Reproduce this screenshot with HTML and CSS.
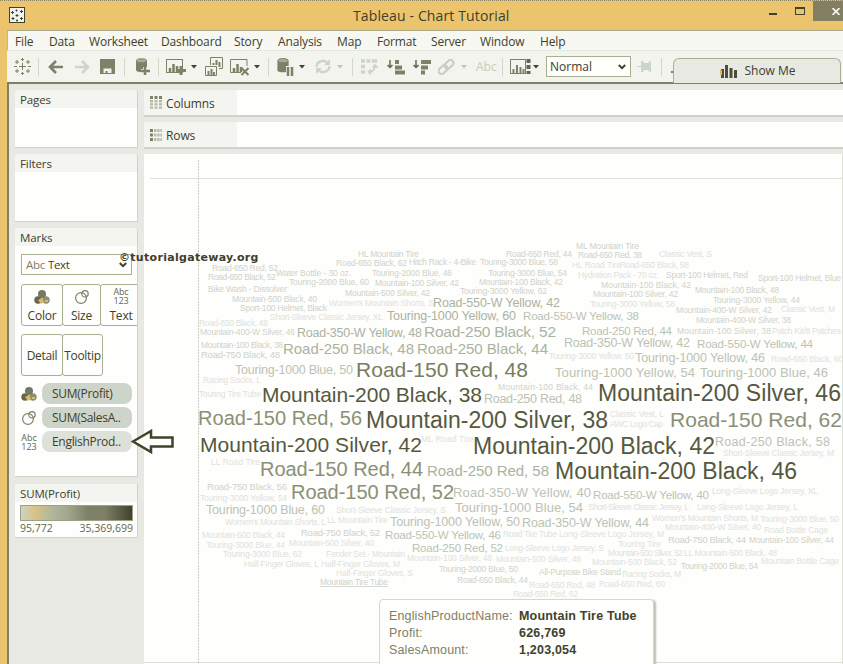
FILE: index.html
```
<!DOCTYPE html>
<html lang="en">
<head>
<meta charset="utf-8">
<title>Tableau - Chart Tutorial</title>
<link rel="stylesheet" href="styles.css">
</head>
<body>
<svg class="defs" width="0" height="0">
  <symbol id="caret" viewBox="0 0 8 5"><path d="M1 1h6L4 4.500z" fill="currentColor"/></symbol>
  <symbol id="balls" viewBox="0 0 16 16"><circle cx="4" cy="11" r="3.700" fill="#62664e"/><circle cx="12" cy="11" r="3.700" fill="#8b9074"/><path d="M4 11l4-2 2 4-3 2z" fill="#dfb566"/><circle cx="8" cy="5" r="4" fill="#74785f"/><path d="M11 12h3" stroke="#ecc870" stroke-width="1.500"/></symbol>
  <symbol id="rings" viewBox="0 0 16 16"><g fill="none" stroke="#7e8068" stroke-width="1.200"><circle cx="7" cy="9" r="5.400"/><circle cx="11" cy="4.800" r="3.200"/></g></symbol>
  <symbol id="cylinder" viewBox="0 0 12 16"><path d="M0 3v10c0 3 12 3 12 0V3z" fill="#7e8068"/><ellipse cx="6" cy="2.800" rx="5.500" ry="2.200" fill="#a7ad98" stroke="#7e8068"/></symbol>
</svg>
<div class="window">
  <header class="titlebar">
    <svg class="app-icon" width="16" height="16"><rect x=".5" y=".5" width="15" height="15" fill="#f3f4ef" stroke="#40422c"/><path d="M2 5.500h3M3.500 4v3M6.500 3.500h2M7.500 2.500v2M11 4.500h3M12.500 3v3M6.500 8.500h3M8 7v3M2.500 11.500h3M4 10v3M7 13.500h2M8 12.500v2M11 11.500h3M12.500 10v3" stroke="#40422c"/></svg>
    <h1>Tableau - Chart Tutorial</h1>
    <div class="controls"><i class="min"></i><i class="max"></i><span class="close"><svg width="8" height="7"><path d="M.5 0l7 7M7.500 0l-7 7" stroke="#f4f4ee" stroke-width="1.700"/></svg></span></div>
  </header>
  <nav class="menu">
    <span style="width:34px">File</span><span style="width:40px">Data</span><span style="width:72px">Worksheet</span><span style="width:73px">Dashboard</span><span style="width:44px">Story</span><span style="width:59px">Analysis</span><span style="width:40px">Map</span><span style="width:54px">Format</span><span style="width:49px">Server</span><span style="width:60px">Window</span><span>Help</span>
  </nav>
  <div class="toolbar">
    <span style="width:24px"><svg width="17" height="17"><path d="M8.500 5v7M5 8.500h7M3 2v4M1 4h4M14 2v4M12 4h4M3 11v4M1 13h4M14 11v4M12 13h4M8.500 0v3M7 1.500h3M8.500 14v3M7 15.500h3M0 8.500h3M14 8.500h3" stroke="#7e8068"/></svg></span>
    <span style="width:10px"><i class="sep"></i></span>
    <span style="width:26px"><svg width="16" height="14"><path d="M8 1L2 7l6 6M2 7h13" fill="none" stroke="#7e8068" stroke-width="2.600"/></svg></span>
    <span style="width:26px"><svg width="16" height="14"><path d="M8 1l6 6-6 6M1 7h13" fill="none" stroke="#cdd5ca" stroke-width="2.600"/></svg></span>
    <span style="width:24px"><svg width="15" height="15"><path d="M0 0h15v15H0z" fill="#7e8068"/><path d="M3.500 9.500h8V14h-4v-2h-2v2h-2z" fill="#eff1ea"/></svg></span>
    <span style="width:11px"><i class="sep"></i></span>
    <span style="width:23px"><svg width="16" height="18"><use href="#cylinder" x="1" width="11" height="15"/><path d="M10 9v8M6 13h9" stroke="#f4f4ee" stroke-width="4"/><path d="M10 9v8M6 13h9" stroke="#7e8068" stroke-width="2.500"/></svg></span>
    <span style="width:8px"><i class="sep"></i></span>
    <span style="width:24px"><svg width="20" height="18"><rect x=".5" y="1.500" width="16" height="13" fill="none" stroke="#7e8068"/><path d="M4 14v-4M7.500 14V6M11 14V8" stroke="#7e8068" stroke-width="2.500"/><path d="M15 8v9M11 12.500h9" stroke="#7e8068" stroke-width="3"/></svg></span>
    <span style="width:15px"><svg class="caret" width="8" height="5"><use href="#caret"/></svg></span>
    <span style="width:25px"><svg width="18" height="19"><path d="M5.500 8V.5h12v11H14M.5 9.500h11v9H.5z" fill="none" stroke="#7e8068"/><path d="M8.500 8V6M11.500 8V3M14.500 10V5M3.500 18v-4M6.500 18v-6M9 18v-3" stroke="#7e8068" stroke-width="2"/></svg></span>
    <span style="width:23px"><svg width="19" height="18"><path d="M17 8V1.500H.5v13H11" fill="none" stroke="#7e8068"/><path d="M4 14v-4M7.500 14V6M11 14V9" stroke="#7e8068" stroke-width="2.500"/><path d="M11.500 10l7 7M18.500 10l-7 7" stroke="#7e8068" stroke-width="2"/></svg></span>
    <span style="width:15px"><svg class="caret" width="8" height="5"><use href="#caret"/></svg></span>
    <span style="width:9px"><i class="sep"></i></span>
    <span style="width:21px"><svg width="17" height="18"><use href="#cylinder" width="12" height="15"/><path d="M9 8h8v10H9z" fill="#f1f3ec"/><path d="M11 9v9M15 9v9" stroke="#7e8068" stroke-width="2.500"/></svg></span>
    <span style="width:17px"><svg class="caret" width="8" height="5"><use href="#caret"/></svg></span>
    <span style="width:21px"><svg width="16" height="15"><path d="M1.500 8c0-6 8-8 11-4M14.500 7c0 6-8 8-11 4" fill="none" stroke="#cdd5ca" stroke-width="2.400"/><path d="M15 0v6H9zM1 15V9h6z" fill="#cdd5ca"/></svg></span>
    <span style="width:16px"><svg class="caret dim" width="8" height="5"><use href="#caret"/></svg></span>
    <span style="width:9px"><i class="sep"></i></span>
    <span style="width:26px"><svg width="17" height="16"><path d="M0 2h4M5.500 2h4M11 2h5M0 7.500h4M0 13h4" stroke="#cdd5ca" stroke-width="3.600"/><path d="M14 6c0 5-2 7-6 7M11.500 8.500L14 6l2.500 2.500M10 10.500L7.500 13l2.500 2.500" fill="none" stroke="#cdd5ca" stroke-width="1.800"/></svg></span>
    <span style="width:26px"><svg width="19" height="16"><path d="M3 1v7M.5 6L3 8.500 5.500 6" fill="none" stroke="#62664e" stroke-width="1.500"/><path d="M8 3h4M8 8.500h7M8 13.500h10" stroke="#7e8068" stroke-width="4"/></svg></span>
    <span style="width:25px"><svg width="19" height="16"><path d="M3 1v7M.5 6L3 8.500 5.500 6" fill="none" stroke="#62664e" stroke-width="1.500"/><path d="M8 3h10M8 8.500h7M8 13.500h4" stroke="#7e8068" stroke-width="4"/></svg></span>
    <span style="width:22px"><svg width="17" height="16"><g fill="none" stroke="#c6cec0" stroke-width="2" transform="rotate(-42 8 8)"><rect x="-1" y="5" width="10" height="6" rx="3"/><rect x="7" y="5" width="10" height="6" rx="3"/></g></svg></span>
    <span style="width:16px"><svg class="caret dim" width="8" height="5"><use href="#caret"/></svg></span>
    <span class="abc" style="width:26px">Abc</span>
    <span style="width:8px"><i class="sep"></i></span>
    <span style="width:22px"><svg width="21" height="15"><rect x=".5" y=".5" width="15" height="14" fill="none" stroke="#7e8068"/><path d="M3.500 14v-4M7 14V6M10.500 14V8M13.500 14v-4" stroke="#7e8068" stroke-width="2"/><path d="M18.500 0v4M18.500 6v4M18.500 12v3" stroke="#62664e" stroke-width="4"/></svg></span>
    <span style="width:14px"><svg class="caret" width="8" height="5"><use href="#caret"/></svg></span>
    <div class="select">Normal<svg width="8" height="6"><path d="M.8 1L4 4.200 7.200 1" fill="none" stroke="#40422c" stroke-width="2"/></svg></div>
    <span class="pin"><svg width="15" height="11"><path d="M0 5.500h5" stroke="#cdd5ca"/><path d="M4 0h2l1 2h4l2-2h1v11h-1l-2-2H7l-1 2H4z" fill="#cdd5ca"/></svg></span>
    <span class="last"><i class="sep"></i><i class="nub"></i></span>
    <div class="showme"><svg width="17" height="13"><path d="M1 4h3v9H1zM5 0h3v13H5zM9.500 3h3v10h-3zM14 5h3v8h-3z" fill="#4d5039"/><path d="M0 5h2v5H0z" fill="#deb465"/></svg>Show Me</div>
  </div>
  <main>
    <aside>
      <section class="card pages"><h2>Pages</h2></section>
      <section class="card filters"><h2>Filters</h2></section>
      <section class="card marks"><h2>Marks</h2>
        <div class="marktype"><em>Abc</em><b>Text</b><svg width="8" height="6"><path d="M.8 1L4 4.200 7.200 1" fill="none" stroke="#40422c" stroke-width="2"/></svg></div>
        <div class="buttons"><div><svg width="16" height="16"><use href="#balls"/></svg>Color</div><div><svg width="16" height="16"><use href="#rings"/></svg>Size</div><div><span class="abc123">Abc<br>123</span>Text</div></div>
        <div class="buttons two"><div>Detail</div><div>Tooltip</div></div>
        <div class="pills">
          <svg width="16" height="16"><use href="#balls"/></svg><span>SUM(Profit)</span>
          <svg width="16" height="16"><use href="#rings"/></svg><span>SUM(SalesA..</span>
          <span class="abc123">Abc<br>123</span><span class="light">EnglishProd..</span>
        </div>
      </section>
      <section class="card legend"><h2>SUM(Profit)</h2><div class="ramp"></div><div class="range"><span>95,772</span><span>35,369,699</span></div></section>
    </aside>
    <div class="work">
      <div class="shelf"><div><svg width="12" height="13"><path d="M0 1.500h3M4.500 1.500h3M9 1.500h3" stroke="#7e8068" stroke-width="3"/><path d="M1.500 4v9M6 4v9M10.500 4v9" stroke="#b3bcaa" stroke-width="3" stroke-dasharray="2.400 .8"/></svg>Columns</div></div>
      <div class="shelf"><div><svg width="12" height="12"><path d="M1.500 0v3M1.500 4.500v3M1.500 9v3" stroke="#7e8068" stroke-width="3"/><path d="M4 1.500h9M4 6h9M4 10.500h9" stroke="#b3bcaa" stroke-width="3" stroke-dasharray="2.400 .8"/></svg>Rows</div></div>
      <div class="view">
        <svg class="cloud" width="699" height="510" viewBox="144 154 699 510">
          <path d="M150 178.500h693M144 662.500h699M842.500 154v510" stroke="#dce0d6"/>
          <path d="M198.500 160v504" stroke="#c8cfc2" stroke-dasharray="2 1"/>
          <g class="w dark" font-size="23">
            <text x="262" y="402" textLength="220" font-size="21">Mountain-200 Black, 38</text>
            <text x="598" y="401" textLength="243">Mountain-200 Silver, 46</text>
            <text x="366" y="428" textLength="242">Mountain-200 Silver, 38</text>
            <text x="200" y="452" textLength="222" font-size="21">Mountain-200 Silver, 42</text>
            <text x="473" y="454" textLength="242">Mountain-200 Black, 42</text>
            <text x="555" y="479" textLength="242">Mountain-200 Black, 46</text>
          </g>
          <g class="w mid" font-size="21">
            <text class="deep" x="356" y="377" textLength="172">Road-150 Red, 48</text>
            <text x="198" y="425" textLength="164" font-size="20">Road-150 Red, 56</text>
            <text x="670" y="427" textLength="172">Road-150 Red, 62</text>
            <text x="260" y="476" textLength="163" font-size="20">Road-150 Red, 44</text>
            <text x="291" y="499" textLength="163" font-size="20">Road-150 Red, 52</text>
          </g>
          <g class="w soft" font-size="15">
            <text x="424" y="337" textLength="132" font-size="15.500">Road-250 Black, 52</text>
            <text x="283" y="354" textLength="131">Road-250 Black, 48</text>
            <text x="417" y="354" textLength="131">Road-250 Black, 44</text>
            <text x="297" y="337" textLength="125" font-size="12.500">Road-350-W Yellow, 48</text>
            <text x="427" y="476" textLength="122">Road-250 Red, 58</text>
            <text x="433" y="307" textLength="127" font-size="12.500">Road-550-W Yellow, 42</text>
            <text x="387" y="320" textLength="129" font-size="12.500">Touring-1000 Yellow, 60</text>
          </g>
          <g class="w pale" font-size="12.500">
            <text x="523" y="320" textLength="116" font-size="11.500">Road-550-W Yellow, 38</text>
            <text x="582" y="335" textLength="90" font-size="11.500">Road-250 Red, 44</text>
            <text x="564" y="347" textLength="126">Road-350-W Yellow, 42</text>
            <text x="697" y="348" textLength="116" font-size="11.500">Road-550-W Yellow, 44</text>
            <text x="635" y="362" textLength="130">Touring-1000 Yellow, 46</text>
            <text x="235" y="374" textLength="118">Touring-1000 Blue, 50</text>
            <text x="555" y="377" textLength="140" font-size="13">Touring-1000 Yellow, 54</text>
            <text x="700" y="377" textLength="128" font-size="13">Touring-1000 Blue, 46</text>
            <text x="484" y="403" textLength="98">Road-250 Red, 48</text>
            <text x="715" y="446" textLength="115">Road-250 Black, 58</text>
            <text x="453" y="497" textLength="138" font-size="13">Road-350-W Yellow, 40</text>
            <text x="593" y="499" textLength="116" font-size="11.500">Road-550-W Yellow, 40</text>
            <text x="455" y="512" textLength="128" font-size="13">Touring-1000 Blue, 54</text>
            <text x="206" y="514" textLength="119">Touring-1000 Blue, 60</text>
            <text x="390" y="526" textLength="130">Touring-1000 Yellow, 50</text>
            <text x="522" y="527" textLength="127">Road-350-W Yellow, 44</text>
            <text x="385" y="539" textLength="116" font-size="11.500">Road-550-W Yellow, 46</text>
            <text x="412" y="552" textLength="91" font-size="11.500">Road-250 Red, 52</text>
          </g>
          <g class="w faint" font-size="8.500">
            <text x="301" y="536" textLength="79" font-size="9.500">Road-750 Black, 52</text>
            <text x="668" y="543" textLength="78" font-size="9.500">Road-750 Black, 44</text>
            <text x="749" y="543" textLength="85">Mountain-100 Silver, 44</text>
            <text x="201" y="358" textLength="79" font-size="9.500">Road-750 Black, 48</text>
            <text x="207" y="490" textLength="80" font-size="9.500">Road-750 Black, 56</text>
            <text x="677" y="334" textLength="94">Mountain-100 Silver, 38</text>
            <text x="666" y="278" textLength="82">Sport-100 Helmet, Red</text>
            <text x="758" y="281" textLength="83">Sport-100 Helmet, Blue</text>
            <text x="695" y="293" textLength="84">Mountain-100 Black, 48</text>
            <text x="601" y="288" textLength="90">Mountain-100 Black, 42</text>
            <text x="593" y="297" textLength="85">Mountain-100 Silver, 42</text>
            <text x="498" y="390" textLength="95">Mountain-100 Black, 44</text>
            <text x="372" y="276" textLength="80">Touring-2000 Blue, 46</text>
            <text x="375" y="286" textLength="84">Mountain-100 Silver, 42</text>
            <text x="345" y="296" textLength="85">Mountain-500 Silver, 42</text>
            <text x="506" y="257" textLength="66">Road-650 Red, 44</text>
            <text x="576" y="249" textLength="63">ML Mountain Tire</text>
            <text x="578" y="258" textLength="64">Road-650 Red, 38</text>
            <text x="479" y="285" textLength="84">Mountain-100 Black, 42</text>
            <text x="488" y="276" textLength="79">Touring-3000 Blue, 54</text>
            <text x="358" y="257" textLength="61">HL Mountain Tire</text>
            <text x="336" y="266" textLength="71">Road-650 Black, 62</text>
            <text x="409" y="265" textLength="67">Hitch Rack - 4-Bike</text>
            <text x="480" y="265" textLength="78">Touring-3000 Blue, 58</text>
            <text x="289" y="285" textLength="80">Touring-2000 Blue, 60</text>
            <text x="276" y="276" textLength="75">Water Bottle - 30 oz.</text>
            <text x="208" y="280" textLength="68">Road-650 Black, 52</text>
            <text x="212" y="271" textLength="66">Road-650 Red, 52</text>
            <text x="208" y="292" textLength="79">Bike Wash - Dissolver</text>
            <text x="232" y="302" textLength="85">Mountain-500 Black, 40</text>
            <text x="240" y="311" textLength="87">Sport-100 Helmet, Black</text>
            <text x="460" y="294" textLength="87">Touring-3000 Yellow, 62</text>
            <text x="713" y="303" textLength="87">Touring-3000 Yellow, 44</text>
            <text x="676" y="313" textLength="96">Mountain-400-W Silver, 42</text>
            <text x="696" y="323" textLength="95">Mountain-400-W Silver, 38</text>
            <text x="200" y="335" textLength="95">Mountain-400-W Silver, 46</text>
            <text x="201" y="348" textLength="82">Mountain-100 Black, 38</text>
            <text x="439" y="572" textLength="79">Touring-2000 Blue, 50</text>
            <text x="457" y="583" textLength="71">Road-650 Black, 44</text>
            <text x="539" y="575" textLength="82">All-Purpose Bike Stand</text>
            <text x="681" y="569" textLength="77">Touring-2000 Blue, 54</text>
            <text x="320" y="585" textLength="68" text-decoration="underline">Mountain Tire Tube</text>
          </g>
          <g class="w ghost" font-size="8.500">
            <text x="329" y="306" textLength="105">Women's Mountain Shorts, S</text>
            <text x="270" y="320" textLength="113">Short-Sleeve Classic Jersey, XL</text>
            <text x="199" y="326" textLength="69">Road-650 Black, 48</text>
            <text x="203" y="383" textLength="58">Racing Socks, L</text>
            <text x="199" y="397" textLength="62">Touring Tire Tube</text>
            <text x="659" y="257" textLength="53">Classic Vest, S</text>
            <text x="572" y="268" textLength="49">HL Road Tire</text>
            <text x="620" y="268" textLength="69">Road-650 Black, 58</text>
            <text x="578" y="278" textLength="81">Hydration Pack - 70 oz.</text>
            <text x="590" y="307" textLength="85">Touring-3000 Yellow, 58</text>
            <text x="781" y="312" textLength="54">Classic Vest, M</text>
            <text x="772" y="334" textLength="69">Patch Kit/8 Patches</text>
            <text x="549" y="359" textLength="85">Touring-3000 Yellow, 50</text>
            <text x="771" y="362" textLength="72">Road-650 Black, 60</text>
            <text x="610" y="417" textLength="54">Classic Vest, L</text>
            <text x="610" y="427" textLength="53">AWC Logo Cap</text>
            <text x="723" y="456" textLength="111">Short-Sleeve Classic Jersey, M</text>
            <text x="712" y="494" textLength="106">Long-Sleeve Logo Jersey, XL</text>
            <text x="211" y="465" textLength="49">LL Road Tire</text>
            <text x="421" y="442" textLength="53">ML Road Tire</text>
            <text x="200" y="501" textLength="87">Touring-3000 Yellow, 54</text>
            <text x="336" y="513" textLength="110">Short-Sleeve Classic Jersey, S</text>
            <text x="588" y="510" textLength="101">Short-Sleeve Classic Jersey, L</text>
            <text x="697" y="510" textLength="101">Long-Sleeve Logo Jersey, L</text>
            <text x="225" y="525" textLength="101">Women's Mountain Shorts, L</text>
            <text x="327" y="523" textLength="61">LL Mountain Tire</text>
            <text x="652" y="521" textLength="106">Women's Mountain Shorts, M</text>
            <text x="760" y="522" textLength="79">Touring-3000 Blue, 50</text>
            <text x="665" y="530" textLength="96">Mountain-400-W Silver, 40</text>
            <text x="764" y="533" textLength="64">Road Bottle Cage</text>
            <text x="503" y="537" textLength="54">Road Tire Tube</text>
            <text x="559" y="537" textLength="105">Long-Sleeve Logo Jersey, M</text>
            <text x="505" y="551" textLength="99">Long-Sleeve Logo Jersey, S</text>
            <text x="202" y="538" textLength="83">Mountain-500 Black, 44</text>
            <text x="206" y="548" textLength="79">Touring-3000 Blue, 44</text>
            <text x="289" y="546" textLength="85">Mountain-500 Silver, 40</text>
            <text x="223" y="557" textLength="79">Touring-3000 Blue, 62</text>
            <text x="326" y="557" textLength="79">Fender Set - Mountain</text>
            <text x="244" y="567" textLength="75">Half-Finger Gloves, L</text>
            <text x="321" y="567" textLength="79">Half-Finger Gloves, M</text>
            <text x="336" y="576" textLength="77">Half-Finger Gloves, S</text>
            <text x="407" y="561" textLength="85">Mountain-100 Silver, 48</text>
            <text x="496" y="562" textLength="85">Mountain-500 Silver, 48</text>
            <text x="618" y="547" textLength="43">Touring Tire</text>
            <text x="608" y="556" textLength="75">Mountain-500 Silver, 52</text>
            <text x="684" y="556" textLength="93">LL Mountain-500 Black, 48</text>
            <text x="592" y="565" textLength="85">Mountain-500 Black, 52</text>
            <text x="761" y="564" textLength="78">Mountain Bottle Cage</text>
            <text x="622" y="577" textLength="59">Racing Socks, M</text>
            <text x="529" y="588" textLength="66">Road-650 Red, 48</text>
            <text x="599" y="587" textLength="66">Road-650 Red, 60</text>
            <text x="513" y="597" textLength="65">Road-650 Red, 62</text>
          </g>
        </svg>
        <dl class="tip"><dt>EnglishProductName:</dt><dd>Mountain Tire Tube</dd><dt>Profit:</dt><dd>626,769</dd><dt>SalesAmount:</dt><dd>1,203,054</dd></dl>
      </div>
    </div>
  </main>
  <div class="watermark">©tutorialgateway.org</div>
  <svg class="arrow" width="44" height="25"><path d="M2 12.500L20 2v6.500h21.500v9H20V23z" fill="#fdfdfb" stroke="#40422c" stroke-width="2.500"/></svg>
</div>
</body>
</html>
```

FILE: styles.css
```
* { box-sizing: border-box; }
body { margin: 0; width: 843px; height: 664px; overflow: hidden; background: #ecc46d; color: #3e402b; font: 12px/16px "Open Sans", sans-serif; }
h1, h2, dl, dd { margin: 0; font-weight: 400; }
svg { display: block; flex: none; }
.defs { position: absolute; }
.window { position: relative; width: 843px; height: 664px; overflow: hidden; display: flex; flex-direction: column; border-top: 1px dotted #8c8460; }
.titlebar { height: 29px; display: flex; align-items: flex-start; flex: none; }
.app-icon { margin: 6px 0 0 9px; }
.titlebar h1 { margin: 5px 0 0 328px; width: 160px; font-size: 14px; line-height: 20px; letter-spacing: .13px; white-space: nowrap; }
.controls { margin-left: auto; display: flex; align-items: flex-start; }
.min { width: 8px; height: 2px; margin: 12px 18px 0 0; background: #40422c; }
.max { width: 10px; height: 8px; margin: 6px 8px 0 0; border: 1px solid #40422c; border-top-width: 2px; }
.close { width: 30px; height: 20px; background: #827f62; padding: 7px 0 0 19px; }
.menu { margin-left: 7px; padding: 3px 0 0 7px; height: 21px; flex: none; display: flex; background: #f7f8f2; border-top: 1px solid #aaa98a; border-left: 1px solid #bdb991; border-bottom: 1px solid #e4e7df; white-space: nowrap; letter-spacing: -.15px; }
.toolbar { margin-left: 7px; padding-left: 7px; height: 33px; flex: none; display: flex; background: #f3f4ee; border-bottom: 2px solid #7e8068; }
.toolbar > span { height: 31px; flex: none; display: flex; align-items: center; }
.sep { width: 1px; height: 18px; background: #d0d7cb; }
.nub { width: 3px; height: 2px; margin: 10px 0 0 9px; background: #7e8068; }
.caret { color: #40422c; }
.caret.dim { color: #bdc7b9; }
.abc { color: #c6cec0; }
.select { width: 85px; height: 21px; margin-top: 5px; flex: none; padding: 0 4px 0 3px; display: flex; align-items: center; justify-content: space-between; background: #fefefb; border: 1px solid #a9af91; }
.toolbar > .pin { width: 30px; padding-left: 6px; }
.toolbar > .last { width: 12px; }
.showme { width: 168px; height: 25px; margin-top: 7px; flex: none; display: flex; align-items: center; justify-content: center; gap: 7px; padding-left: 2px; background: #e8e9e3; border: 1px solid #a9af91; border-bottom: 0; border-radius: 6px 6px 0 0; }
main { flex: 1; margin-left: 7px; display: flex; background: #e8e9e3; border-left: 2px solid #7e8068; min-height: 0; }
aside { width: 129px; padding: 6px 0 0 6px; flex: none; display: flex; flex-direction: column; }
.card { width: 123px; background: #fefefc; border-right: 1px solid #cdd4c8; border-bottom: 1px solid #cdd4c8; border-radius: 4px 4px 0 0; overflow: hidden; flex: none; }
.card h2 { height: 18px; padding-left: 5px; background: #f4f5f0; font-size: 11.500px; line-height: 19px; letter-spacing: -.1px; }
.pages { height: 58px; margin-bottom: 6px; }
.filters { height: 68px; margin-bottom: 6px; }
.marks { height: 249px; margin-bottom: 7px; }
.marktype { width: 111px; height: 21px; margin: 8px 0 0 6px; padding: 0 4px; display: flex; align-items: center; gap: 3px; border: 1px solid #a9af91; font-size: 11.500px; letter-spacing: -.3px; }
.marktype em { color: #7e8068; font-style: normal; }
.marktype b { font-weight: 400; }
.marktype svg { margin-left: auto; }
.buttons { display: flex; margin: 9px 0 0 6px; width: 123px; }
.buttons div { width: 42px; height: 42px; margin-right: -1px; flex: none; border: 1px solid #a9af91; border-radius: 3px; display: flex; flex-direction: column; align-items: center; justify-content: flex-end; padding-bottom: 1px; gap: 3px; letter-spacing: -.2px; }
.buttons div:nth-child(2) { width: 39px; }
.two { margin-top: 8px; }
.buttons.two div { justify-content: center; padding: 2px 0 0; letter-spacing: -.3px; }
.buttons.two div:nth-child(2) { width: 41px; }
.abc123 { font-size: 9px; line-height: 9px; color: #62664e; text-align: center; }
.pills { display: grid; grid-template-columns: 16px 90px; column-gap: 5px; row-gap: 3px; margin: 7px 0 0 6px; align-items: center; }
.pills > span:not(.abc123) { height: 21px; padding-left: 10px; border-radius: 8px; background: #cdd5ca; line-height: 22px; letter-spacing: -.3px; white-space: nowrap; }
.pills > span.light { background: #dde1d9; }
.legend { height: 54px; border-radius: 0; }
.ramp { width: 113px; height: 16px; margin: 3px 0 0 5px; border: 1px solid #9ba185; background: linear-gradient(90deg, #cdd4c2, #d9c285 13%, #b0b69f 28%, #a2a88e 42%, #7e8068 60%, #7e8068 75%, #40422c); }
.range { display: flex; justify-content: space-between; width: 113px; margin-left: 5px; font-size: 10.500px; line-height: 14px; color: #62664e; }
.work { flex: 1; margin: 6px 0 0 6px; min-width: 0; }
.shelf { height: 27px; margin-bottom: 5px; background: #fefefc; border-bottom: 2px solid #cdd4c8; }
.shelf div { width: 93px; height: 25px; padding: 2px 0 0 6px; display: flex; align-items: center; gap: 4px; background: #f4f5f0; letter-spacing: -.1px; }
.shelf svg { margin-top: -2px; }
.view { position: relative; height: 510px; background: #fefefc; }
.w { font-family: "Liberation Sans", sans-serif; }
.dark { fill: #55583f; }
.mid { fill: #8a9076; }
.deep { fill: #777c62; }
.soft { fill: #aab3a1; }
.pale { fill: #bbc3b5; }
.faint { fill: #ced3ca; }
.ghost { fill: #dfe2dc; }
.tip { position: absolute; left: 235px; top: 445px; width: 275px; height: 70px; padding: 8px 9px; display: grid; grid-template-columns: 130px 1fr; grid-auto-rows: 17px; background: #fefefc; border: 1px solid #d4d9ce; border-radius: 4px; box-shadow: 2px 1px 2px #b7bfaf; font: 12.500px/17px "Liberation Sans", sans-serif; color: #7e8068; }
.tip dt { letter-spacing: .15px; }
.tip dd { color: #40422c; font-weight: 700; white-space: nowrap; letter-spacing: .2px; }
.watermark { position: absolute; left: 119px; top: 249px; font: bold 11px/16px "DejaVu Sans", sans-serif; letter-spacing: .3px; }
.arrow { position: absolute; left: 131px; top: 428px; }
```
